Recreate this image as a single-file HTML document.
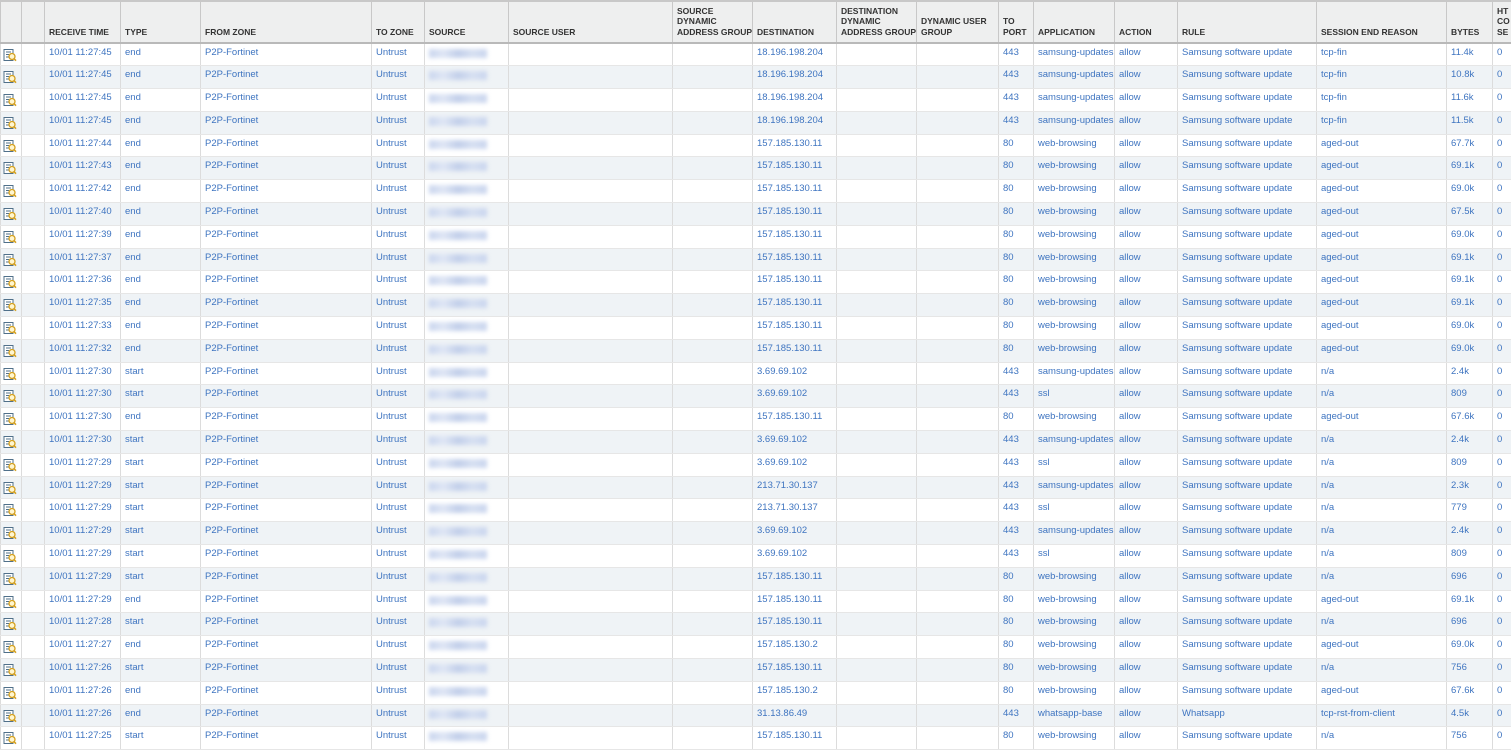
<!DOCTYPE html>
<html><head><meta charset="utf-8"><style>
body{margin:0;width:1511px;height:737px;overflow:hidden;background:#fff;font-family:"Liberation Sans",sans-serif}
table{border-collapse:collapse;table-layout:fixed;width:1520px;position:absolute;left:0;top:0}
th{background:#eeefef;height:42px;box-sizing:border-box;border:1px solid #c8c8c8;border-top:2px solid #c8c8c8;border-bottom:2px solid #b9b9b9;font-size:8.5px;font-weight:bold;color:#333;text-align:left;vertical-align:bottom;padding:0 4px 5px 4px;line-height:10.5px;letter-spacing:0;overflow:hidden;white-space:nowrap}
td{height:22.8px;border-left:1px solid #dcdcdc;border-right:1px solid #dcdcdc;border-bottom:1px solid #e6e6e6;font-size:9.5px;color:#3e74c0;padding:0 4px;vertical-align:top;padding-top:3px;white-space:nowrap;overflow:hidden;box-sizing:border-box}
tr:nth-child(even) td{background:#eff3f6}
.i{padding:4px 0 0 2px}
.s{position:relative}
.s:after{content:"";position:absolute;left:4px;top:5px;width:58px;height:9px;background:linear-gradient(90deg,#c9d5ee,#dfe6f5,#c2cfea,#d7e0f2,#c9d5ee);filter:blur(2px)}
</style></head><body>
<table>
<colgroup><col style="width:21px"><col style="width:23px"><col style="width:76px"><col style="width:80px"><col style="width:171px"><col style="width:53px"><col style="width:84px"><col style="width:164px"><col style="width:80px"><col style="width:84px"><col style="width:80px"><col style="width:82px"><col style="width:35px"><col style="width:81px"><col style="width:63px"><col style="width:139px"><col style="width:130px"><col style="width:46px"><col style="width:28px"></colgroup>
<thead><tr><th></th><th></th><th>RECEIVE TIME</th><th>TYPE</th><th>FROM ZONE</th><th>TO ZONE</th><th>SOURCE</th><th>SOURCE USER</th><th>SOURCE<br>DYNAMIC<br>ADDRESS GROUP</th><th>DESTINATION</th><th>DESTINATION<br>DYNAMIC<br>ADDRESS GROUP</th><th>DYNAMIC USER<br>GROUP</th><th>TO<br>PORT</th><th>APPLICATION</th><th>ACTION</th><th>RULE</th><th>SESSION END REASON</th><th>BYTES</th><th>HT<br>CO<br>SE</th></tr></thead>
<tbody id="b">
</tbody></table>
<svg width="0" height="0" style="position:absolute"><defs><symbol id="ic" viewBox="0 0 14 14"><rect x="1" y="1.5" width="9" height="11" fill="#fff" stroke="#50708a" stroke-width="1"/><path d="M3 4h5M3 6.5h3M3 9h3" stroke="#50708a" stroke-width="1"/><circle cx="9" cy="8.5" r="3" fill="#fff6d0" stroke="#d4a020" stroke-width="1.3"/><path d="M11 10.7l2 2" stroke="#d4a020" stroke-width="1.6"/></symbol></defs></svg>
<script>
var d=[["45","end","18.196.198.204","443","samsung-updates","tcp-fin","11.4k"],["45","end","18.196.198.204","443","samsung-updates","tcp-fin","10.8k"],["45","end","18.196.198.204","443","samsung-updates","tcp-fin","11.6k"],["45","end","18.196.198.204","443","samsung-updates","tcp-fin","11.5k"],["44","end","157.185.130.11","80","web-browsing","aged-out","67.7k"],["43","end","157.185.130.11","80","web-browsing","aged-out","69.1k"],["42","end","157.185.130.11","80","web-browsing","aged-out","69.0k"],["40","end","157.185.130.11","80","web-browsing","aged-out","67.5k"],["39","end","157.185.130.11","80","web-browsing","aged-out","69.0k"],["37","end","157.185.130.11","80","web-browsing","aged-out","69.1k"],["36","end","157.185.130.11","80","web-browsing","aged-out","69.1k"],["35","end","157.185.130.11","80","web-browsing","aged-out","69.1k"],["33","end","157.185.130.11","80","web-browsing","aged-out","69.0k"],["32","end","157.185.130.11","80","web-browsing","aged-out","69.0k"],["30","start","3.69.69.102","443","samsung-updates","n/a","2.4k"],["30","start","3.69.69.102","443","ssl","n/a","809"],["30","end","157.185.130.11","80","web-browsing","aged-out","67.6k"],["30","start","3.69.69.102","443","samsung-updates","n/a","2.4k"],["29","start","3.69.69.102","443","ssl","n/a","809"],["29","start","213.71.30.137","443","samsung-updates","n/a","2.3k"],["29","start","213.71.30.137","443","ssl","n/a","779"],["29","start","3.69.69.102","443","samsung-updates","n/a","2.4k"],["29","start","3.69.69.102","443","ssl","n/a","809"],["29","start","157.185.130.11","80","web-browsing","n/a","696"],["29","end","157.185.130.11","80","web-browsing","aged-out","69.1k"],["28","start","157.185.130.11","80","web-browsing","n/a","696"],["27","end","157.185.130.2","80","web-browsing","aged-out","69.0k"],["26","start","157.185.130.11","80","web-browsing","n/a","756"],["26","end","157.185.130.2","80","web-browsing","aged-out","67.6k"],["26","end","31.13.86.49","443","whatsapp-base","tcp-rst-from-client","4.5k"],["25","start","157.185.130.11","80","web-browsing","n/a","756"]];
var h="";d.forEach(function(r){var rule=r[4]=="whatsapp-base"?"Whatsapp":"Samsung software update";h+='<tr><td class="i"><svg width="14" height="14"><use href="#ic"/></svg></td><td></td><td>10/01 11:27:'+r[0]+'</td><td>'+r[1]+'</td><td>P2P-Fortinet</td><td>Untrust</td><td class="s"></td><td></td><td></td><td>'+r[2]+'</td><td></td><td></td><td>'+r[3]+'</td><td>'+r[4]+'</td><td>allow</td><td>'+rule+'</td><td>'+r[5]+'</td><td>'+r[6]+'</td><td>0</td></tr>';});
document.getElementById("b").innerHTML=h;
</script>
</body></html>
